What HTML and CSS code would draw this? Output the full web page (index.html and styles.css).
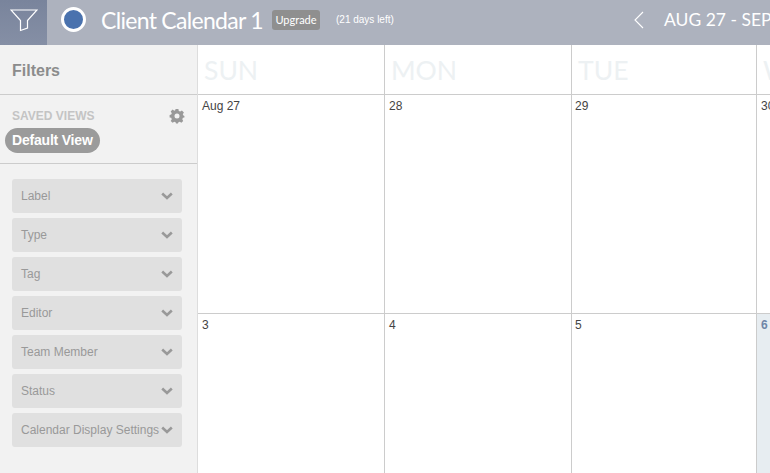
FILE: index.html
```html
<!DOCTYPE html>
<html lang="en">
<head>
  <meta charset="UTF-8" />
  <title>Client Calendar 1</title>
  <link rel="stylesheet" href="styles.css">
</head>
<body>
  <div class="top-bar">
    <div class="filter-toggle">
      <svg width="28" height="23" viewBox="0 0 28 23" fill="none" stroke="#fff" stroke-width="1.2">
        <path d="M1 1 H27 L17.5 11.5 V19 L10.5 21.5 V11.5 Z" />
      </svg>
    </div>
    <div class="bar-content">
      <div class="calendar-dot"></div>
      <div class="calendar-name">Client Calendar 1</div>
      <div class="upgrade">Upgrade</div>
      <div class="days-left">(21 days left)</div>
      <div class="date-nav">
        <svg width="10" height="18" viewBox="0 0 10 18" fill="none" stroke="#fff" stroke-width="1.1">
          <path d="M9 1 L1 9 L9 17" />
        </svg>
        <span class="date-range">AUG 27 - SEP 2</span>
      </div>
    </div>
  </div>

  <div class="main">
    <div class="sidebar">
      <div class="sidebar-title">Filters</div>
      <div class="saved-views">
        <div class="saved-head">
          <span>SAVED VIEWS</span>
          <svg width="16" height="16" viewBox="0 0 16 16">
            <path fill="#999" fill-rule="evenodd" d="M6.6 1 H9.4 L9.8 3 L11.2 3.6 L12.9 2.5 L14.9 4.5 L13.8 6.2 L14.4 7.6 L15.4 8 V9.4 L13.9 9.8 L13.3 11.2 L14.2 12.9 L12.4 14.8 L10.7 13.7 L9.4 14.2 L9 15.4 H7 L6.6 14.2 L5.3 13.7 L3.6 14.8 L1.7 12.9 L2.8 11.2 L2.2 9.8 L0.6 9.4 V7 L2.2 6.6 L2.8 5.2 L1.7 3.5 L3.6 1.6 L5.3 2.7 L6.2 2.3 Z M8 5.6 A2.5 2.5 0 1 0 8 10.6 A2.5 2.5 0 1 0 8 5.6 Z" />
          </svg>
        </div>
        <span class="view-pill">Default View</span>
      </div>
      <div class="filter-list">
        <div class="filter-item"><span>Label</span><svg class="chev" width="12" height="8" viewBox="0 0 12 8"><path d="M1.2 1.5 L6 6 L10.8 1.5" /></svg></div>
        <div class="filter-item"><span>Type</span><svg class="chev" width="12" height="8" viewBox="0 0 12 8"><path d="M1.2 1.5 L6 6 L10.8 1.5" /></svg></div>
        <div class="filter-item"><span>Tag</span><svg class="chev" width="12" height="8" viewBox="0 0 12 8"><path d="M1.2 1.5 L6 6 L10.8 1.5" /></svg></div>
        <div class="filter-item"><span>Editor</span><svg class="chev" width="12" height="8" viewBox="0 0 12 8"><path d="M1.2 1.5 L6 6 L10.8 1.5" /></svg></div>
        <div class="filter-item"><span>Team Member</span><svg class="chev" width="12" height="8" viewBox="0 0 12 8"><path d="M1.2 1.5 L6 6 L10.8 1.5" /></svg></div>
        <div class="filter-item"><span>Status</span><svg class="chev" width="12" height="8" viewBox="0 0 12 8"><path d="M1.2 1.5 L6 6 L10.8 1.5" /></svg></div>
        <div class="filter-item"><span>Calendar Display Settings</span><svg class="chev" width="12" height="8" viewBox="0 0 12 8"><path d="M1.2 1.5 L6 6 L10.8 1.5" /></svg></div>
      </div>
    </div>

    <div class="calendar">
      <div class="day-names">
        <div class="day-name">SUN</div>
        <div class="day-name">MON</div>
        <div class="day-name">TUE</div>
        <div class="day-name">WED</div>
      </div>
      <div class="week">
        <div class="day">Aug 27</div>
        <div class="day">28</div>
        <div class="day">29</div>
        <div class="day">30</div>
      </div>
      <div class="week">
        <div class="day">3</div>
        <div class="day">4</div>
        <div class="day">5</div>
        <div class="day today">6</div>
      </div>
    </div>
  </div>
</body>
</html>
```

FILE: styles.css
```css
html, body {
  height: 100%;
}

body {
  margin: 0;
  overflow: hidden;
  font-family: "Liberation Sans", Arial, sans-serif;
  background: #fff;
  color: #333;
}

.top-bar {
  display: flex;
  height: 45px;
  background: #adb2be;
  color: #fff;
  white-space: nowrap;
  overflow: hidden;
}

.bar-content {
  display: flex;
  align-items: center;
  flex: none;
  height: 39px;
}

.bar-content > * {
  flex: none;
}

.filter-toggle {
  flex: none;
  display: flex;
  align-items: center;
  justify-content: center;
  width: 47px;
  height: 45px;
  padding-bottom: 4px;
  box-sizing: border-box;
  background: linear-gradient(to bottom, #79849c, #858fa5);
}

.calendar-dot {
  width: 19px;
  height: 19px;
  margin-left: 14px;
  border: 3px solid #fff;
  border-radius: 50%;
  background: #4a72ae;
}

.calendar-name {
  margin-left: 15px;
  width: 171px;
  font-family: Lato, sans-serif;
  font-size: 23px;
  letter-spacing: -0.7px;
}

.upgrade {
  height: 20px;
  width: 48px;
  line-height: 20px;
  text-align: center;
  border-radius: 3px;
  background: #8f8f8f;
  font-family: Lato, sans-serif;
  font-size: 11px;
}

.days-left {
  margin-left: 16px;
  width: 57px;
  font-size: 10px;
}

.date-nav {
  display: flex;
  align-items: center;
  margin-left: 241px;
}

.date-range {
  margin-left: 20px;
  font-family: Lato, sans-serif;
  font-size: 17.5px;
}

.main {
  display: flex;
  height: 428px;
}

.sidebar {
  flex: none;
  width: 197px;
  background: #f2f2f2;
  border-right: 1px solid #ddd;
}

.sidebar-title {
  height: 49px;
  padding-left: 12px;
  line-height: 51px;
  font-size: 16px;
  font-weight: bold;
  color: #8c8c8c;
  border-bottom: 1px solid #ccc;
}

.saved-views {
  height: 68px;
  padding: 0 5px;
  border-bottom: 1px solid #ccc;
}

.saved-head {
  display: flex;
  align-items: center;
  justify-content: space-between;
  height: 33px;
  padding: 8px 7px 0;
  box-sizing: border-box;
  font-size: 12px;
  font-weight: bold;
  color: #c4c4c4;
}

.view-pill {
  display: inline-block;
  height: 25px;
  padding: 0 7px;
  line-height: 24px;
  border-radius: 13px;
  background: #9b9b9b;
  color: #fff;
  font-size: 14px;
  font-weight: bold;
  letter-spacing: -0.2px;
}

.filter-list {
  display: flex;
  flex-direction: column;
  gap: 5px;
  padding: 15px 15px 0 12px;
}

.filter-item {
  display: flex;
  align-items: center;
  justify-content: space-between;
  height: 34px;
  padding: 0 9px;
  border-radius: 3px;
  background: #e0e0e0;
  color: #999;
  font-size: 12px;
}

.chev {
  flex: none;
  fill: none;
  stroke: #999;
  stroke-width: 2.6;
}

.calendar {
  flex: none;
  width: 572px;
  overflow: hidden;
}

.day-names, .week {
  display: grid;
  grid-template-columns: 187px 187px 185px 186px;
  width: 745px;
}

.day-names {
  height: 49px;
  border-bottom: 1px solid #ccc;
}

.day-name {
  padding-left: 6px;
  line-height: 51px;
  font-family: Lato, sans-serif;
  font-size: 26.5px;
  color: #edf1f3;
  border-right: 1px solid #ccc;
}

.week {
  height: 218px;
  border-bottom: 1px solid #ccc;
}

.day {
  padding: 4px;
  font-size: 12px;
  color: #444;
  border-right: 1px solid #ccc;
}

.day:nth-child(3) {
  padding-left: 3px;
}

.today {
  background: #e7edf1;
  color: #6f86a8;
  font-weight: bold;
}
```
